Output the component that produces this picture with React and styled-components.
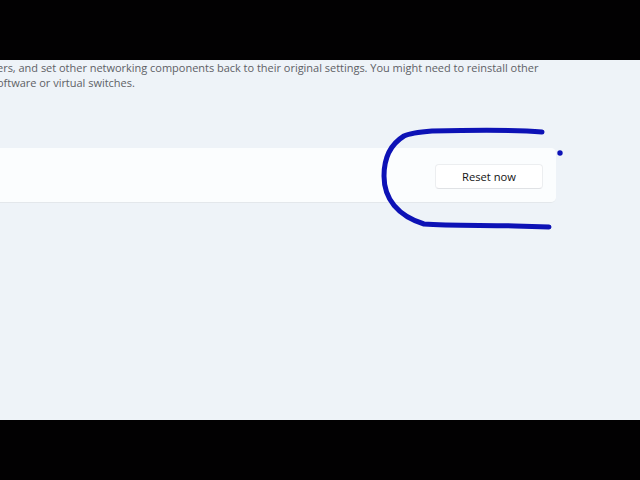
import React from 'react';
import styled, { createGlobalStyle } from 'styled-components';

const Global = createGlobalStyle`
  html, body {
    margin: 0;
    padding: 0;
    background: #000;
  }
  body {
    font-family: "Segoe UI", "Open Sans", "Noto Sans", sans-serif;
  }
`;

const Screen = styled.div`
  width: 640px;
  height: 480px;
  display: flex;
  flex-direction: column;
  background: #020102;
  overflow: hidden;
`;

const Letterbox = styled.div`
  height: 60px;
  flex-shrink: 0;
  background: #020102;
`;

const Page = styled.main`
  position: relative;
  height: 360px;
  flex-shrink: 0;
  background: #eef3f8;
  overflow: hidden;
`;

const Description = styled.p`
  margin: 0 0 0 -3px;
  font-size: 11px;
  line-height: 15px;
  color: #5e6166;
  white-space: nowrap;
  letter-spacing: -0.02px;
`;

const Card = styled.section`
  margin-top: 58px;
  width: 556px;
  height: 55px;
  display: flex;
  align-items: center;
  justify-content: flex-end;
  padding-right: 13px;
  padding-top: 2px;
  box-sizing: border-box;
  background: #fbfdfe;
  border-radius: 0 5px 5px 0;
  border-bottom: 1px solid #e3e7eb;
`;

const Button = styled.button`
  width: 108px;
  height: 25px;
  font-family: inherit;
  font-size: 11.2px;
  color: #141414;
  background: #ffffff;
  border: 1px solid #eceef0;
  border-bottom-color: #e0e2e5;
  border-radius: 4px;
  padding: 0;
  cursor: pointer;
`;

const Ink = styled.svg`
  position: absolute;
  left: 0;
  top: -60px;
  width: 640px;
  height: 480px;
  pointer-events: none;
`;

const Annotation = () => (
  <Ink viewBox="0 0 640 480">
    <path
      d="M542 132 C520 130 470 130 432 131 C420 132 410 133 404 136 C391 144 384 158 384 176 C384 199 398 216 424 224 C450 226 490 225 515 226 L549 227"
      fill="none"
      stroke="#0d12b6"
      strokeWidth="5"
      strokeLinecap="round"
      strokeLinejoin="round"
    />
    <circle cx="560" cy="153" r="2.7" fill="#0d12b6" />
  </Ink>
);

export default function App() {
  return (
    <>
      <Global />
      <Screen>
        <Letterbox />
        <Page>
          <Description>
            ers, and set other networking components back to their original settings. You might need to reinstall other
            <br />
            oftware or virtual switches.
          </Description>
          <Card>
            <Button>Reset now</Button>
          </Card>
          <Annotation />
        </Page>
        <Letterbox />
      </Screen>
    </>
  );
}
